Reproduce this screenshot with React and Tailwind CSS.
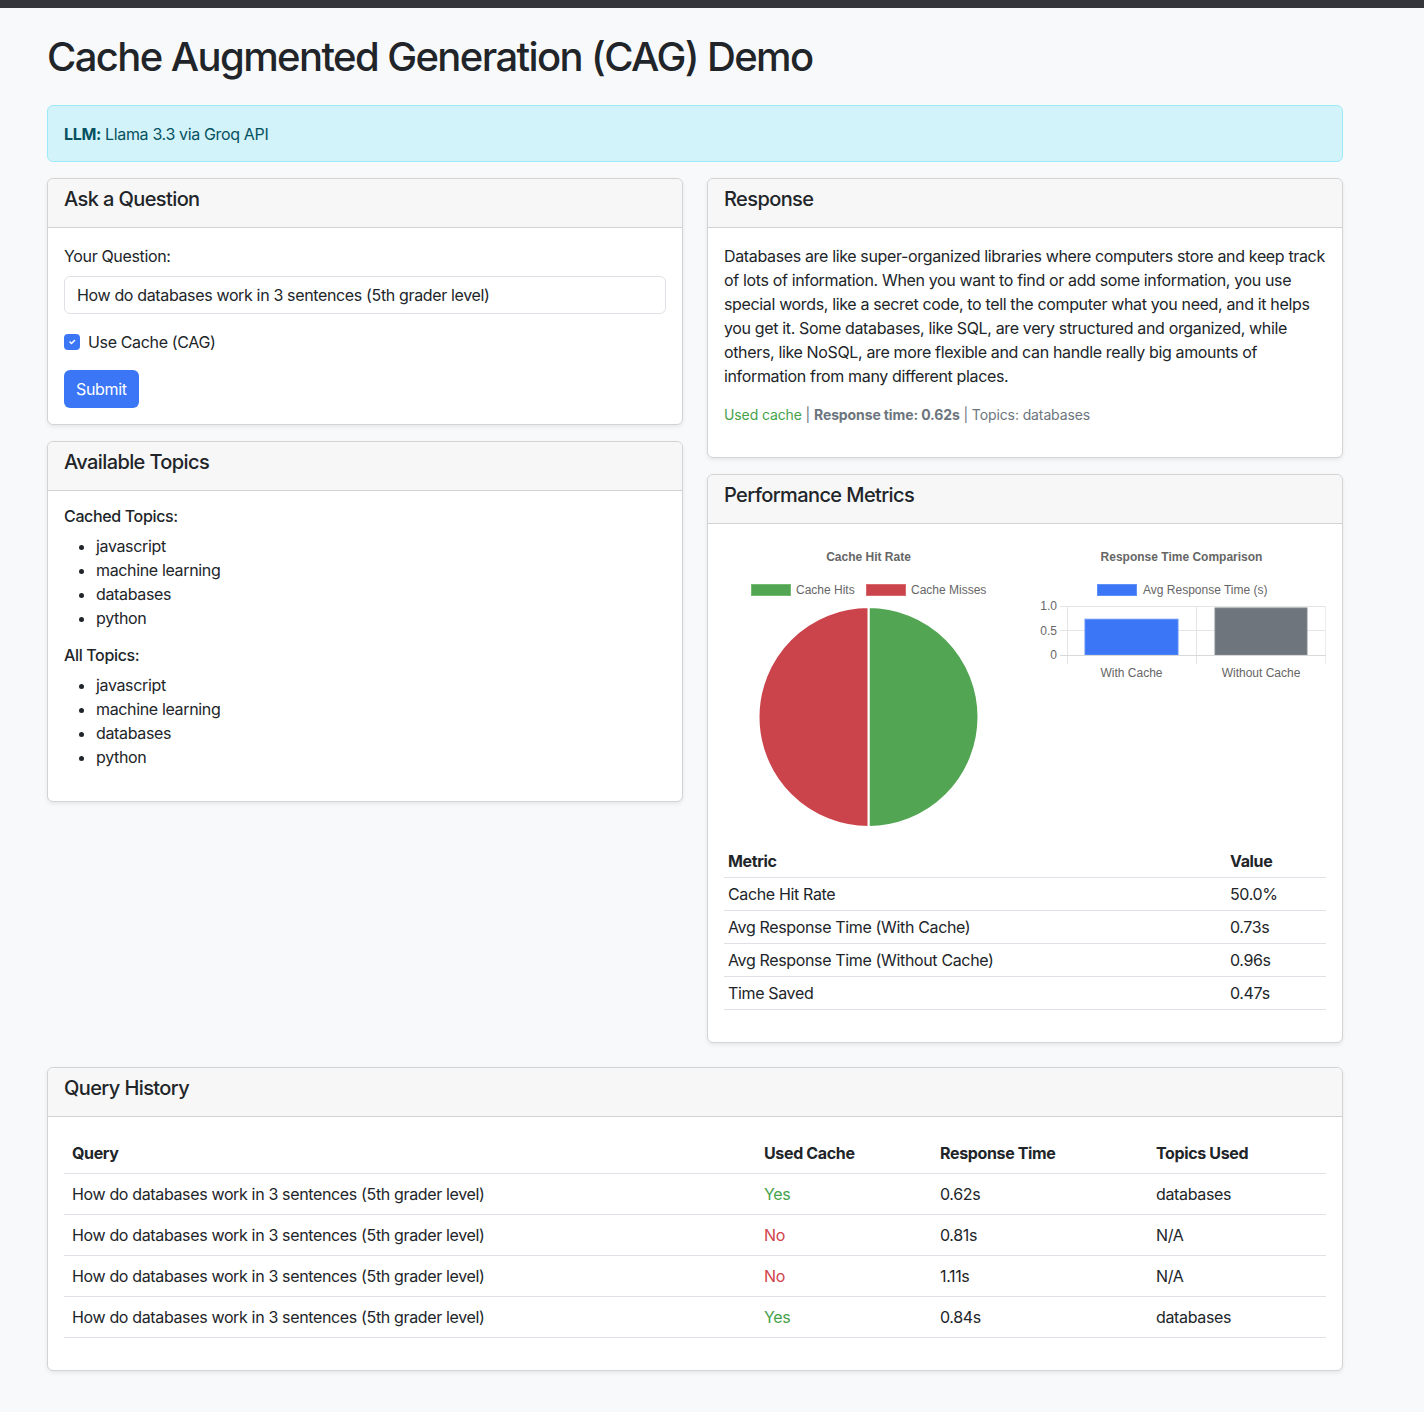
import React from "react";

const BLUE = "#3a76f6";

function Card({ title, children, className = "" }) {
  return (
    <div className={"rounded-md border border-[#d3d3d4] bg-white shadow-[0_2px_4px_rgba(0,0,0,0.075)] " + className}>
      <div className="rounded-t-md border-b border-[#d3d3d4] bg-[#f7f7f7] px-4 pt-2 pb-4 text-[20px] font-medium leading-6 tracking-[-0.03em] text-[#212529]">
        {title}
      </div>
      <div className="p-4">{children}</div>
    </div>
  );
}

function TopicList({ items }) {
  return (
    <ul className="mb-4 list-disc pl-8">
      {items.map((t) => (
        <li key={t} className="leading-6">
          {t}
        </li>
      ))}
    </ul>
  );
}

const svgFont = { fontFamily: "'Liberation Sans', Arial, sans-serif", letterSpacing: 0 };

function PieChart() {
  const cx = 144.5;
  const cy = 177;
  const r = 110;
  return (
    <svg width="289" height="305" style={svgFont}>
      <text x={cx} y="21" textAnchor="middle" fontSize="12" fontWeight="bold" fill="#666">
        Cache Hit Rate
      </text>
      <rect x="27.5" y="44.5" width="39" height="11" fill="#52a552" stroke="#73bb73" strokeWidth="1" />
      <text x="72" y="54" fontSize="12" fill="#666">
        Cache Hits
      </text>
      <rect x="142.5" y="44.5" width="39" height="11" fill="#cc444b" stroke="#d86a70" strokeWidth="1" />
      <text x="187" y="54" fontSize="12" fill="#666">
        Cache Misses
      </text>
      <path d={`M ${cx} ${cy - r} A ${r} ${r} 0 0 1 ${cx} ${cy + r} Z`} fill="#52a552" stroke="#ffffff" strokeWidth="2" />
      <path d={`M ${cx} ${cy + r} A ${r} ${r} 0 0 1 ${cx} ${cy - r} Z`} fill="#cc444b" stroke="#ffffff" strokeWidth="2" />
    </svg>
  );
}

function BarChart() {
  const top = 66;
  const bottom = 115;
  const h = bottom - top;
  const y73 = bottom - h * 0.73;
  const y96 = bottom - h * 0.96;
  return (
    <svg width="289" height="145" style={svgFont}>
      <text x="144.5" y="21" textAnchor="middle" fontSize="12" fontWeight="bold" fill="#666">
        Response Time Comparison
      </text>
      <rect x="60.5" y="44.5" width="39" height="11" fill={BLUE} stroke="#5f92f8" strokeWidth="1" />
      <text x="106" y="54" fontSize="12" fill="#666">
        Avg Response Time (s)
      </text>
      <line x1="23" y1={top + 0.5} x2="289" y2={top + 0.5} stroke="#e5e5e5" />
      <line x1="23" y1={90.5} x2="289" y2={90.5} stroke="#e5e5e5" />
      <line x1="30.5" y1={top} x2="30.5" y2="124" stroke="#e5e5e5" />
      <line x1="159.5" y1={top} x2="159.5" y2="124" stroke="#e5e5e5" />
      <line x1="288.5" y1={top} x2="288.5" y2="124" stroke="#ececec" />
      <rect x="48" y={y73} width="93" height={bottom - y73} fill={BLUE} stroke="#5f92f8" strokeWidth="1" />
      <rect x="178" y={y96} width="92" height={bottom - y96} fill="#6e757c" stroke="#858b91" strokeWidth="1" />
      <line x1="23" y1={bottom + 0.5} x2="289" y2={bottom + 0.5} stroke="#d9d9d9" />
      <text x="20" y={top + 4} textAnchor="end" fontSize="12" fill="#666">
        1.0
      </text>
      <text x="20" y={95} textAnchor="end" fontSize="12" fill="#666">
        0.5
      </text>
      <text x="20" y={bottom + 4} textAnchor="end" fontSize="12" fill="#666">
        0
      </text>
      <text x="94.5" y="137" textAnchor="middle" fontSize="12" fill="#666">
        With Cache
      </text>
      <text x="224" y="137" textAnchor="middle" fontSize="12" fill="#666">
        Without Cache
      </text>
    </svg>
  );
}

const responseLines = [
  "Databases are like super-organized libraries where computers store and keep track",
  "of lots of information. When you want to find or add some information, you use",
  "special words, like a secret code, to tell the computer what you need, and it helps",
  "you get it. Some databases, like SQL, are very structured and organized, while",
  "others, like NoSQL, are more flexible and can handle really big amounts of",
  "information from many different places.",
];

const metrics = [
  ["Cache Hit Rate", "50.0%"],
  ["Avg Response Time (With Cache)", "0.73s"],
  ["Avg Response Time (Without Cache)", "0.96s"],
  ["Time Saved", "0.47s"],
];

const history = [
  ["Yes", "0.62s", "databases"],
  ["No", "0.81s", "N/A"],
  ["No", "1.11s", "N/A"],
  ["Yes", "0.84s", "databases"],
];

export default function App() {
  const q = "How do databases work in 3 sentences (5th grader level)";
  return (
    <div
      className="min-h-screen bg-[#f8f9fa] pb-[42px] text-base leading-6 tracking-[-0.022em] text-[#212529]"
      style={{ fontFamily: "Inter, 'Liberation Sans', Arial, sans-serif" }}
    >
      <div className="h-2 w-full bg-[#35363b]" />
      <div className="ml-[47px] w-[1296px]">
        <h1 className="mt-[25px] mb-6 text-[40px] font-medium leading-[48px] tracking-[-0.04em]">
          Cache Augmented Generation (CAG) Demo
        </h1>

        <div className="mb-4 rounded-md border border-[#9eeaf9] bg-[#d3f3fb] px-4 pt-4 pb-[15px] text-[#055160]">
          <strong className="font-bold">LLM:</strong> Llama 3.3 via Groq API
        </div>

        <div className="flex items-start gap-6">
          <div className="flex w-[636px] flex-col gap-4">
            <Card title="Ask a Question">
              <div className="mb-2">Your Question:</div>
              <div className="mb-4 flex h-[38px] w-full items-center rounded-md border border-[#dee2e6] bg-white px-3">
                {q}
              </div>
              <div className="mb-4 flex h-6 items-center gap-2">
                <span className="flex h-4 w-4 items-center justify-center rounded-[4px]" style={{ background: BLUE }}>
                  <svg width="10" height="10" viewBox="0 0 20 20">
                    <path d="M6 10l3 3l6-6" fill="none" stroke="#fff" strokeWidth="3" strokeLinecap="round" strokeLinejoin="round" />
                  </svg>
                </span>
                <span>Use Cache (CAG)</span>
              </div>
              <button className="h-[38px] rounded-md px-3 text-white" style={{ background: BLUE }}>
                Submit
              </button>
            </Card>

            <Card title="Available Topics">
              <div className="mb-2 font-medium leading-[19px]">Cached Topics:</div>
              <TopicList items={["javascript", "machine learning", "databases", "python"]} />
              <div className="mb-2 font-medium leading-[19px]">All Topics:</div>
              <TopicList items={["javascript", "machine learning", "databases", "python"]} />
            </Card>
          </div>

          <div className="flex w-[636px] flex-col gap-4">
            <Card title="Response">
              <div className="mb-4">
                {responseLines.map((l, i) => (
                  <div key={i} className="whitespace-nowrap">
                    {l}
                  </div>
                ))}
              </div>
              <div className="mb-4 text-sm leading-[21px] tracking-[-0.008em] text-[#6c757d]">
                <span className="text-[#45a249]">Used cache</span> | <strong className="font-bold">Response time: 0.62s</strong> | Topics: databases
              </div>
            </Card>

            <Card title="Performance Metrics">
              <div className="flex h-[305px] items-start gap-6">
                <PieChart />
                <BarChart />
              </div>
              <table className="mb-4 w-full border-collapse">
                <thead>
                  <tr className="border-b border-[#dee2e6]">
                    <th className="w-[502px] px-1 py-1 text-left font-bold">Metric</th>
                    <th className="px-1 py-1 text-left font-bold">Value</th>
                  </tr>
                </thead>
                <tbody>
                  {metrics.map(([m, v]) => (
                    <tr key={m} className="border-b border-[#dee2e6]">
                      <td className="px-1 py-1">{m}</td>
                      <td className="px-1 py-1">{v}</td>
                    </tr>
                  ))}
                </tbody>
              </table>
            </Card>
          </div>
        </div>

        <Card title="Query History" className="mt-6">
          <table className="mb-4 w-full border-collapse">
            <thead>
              <tr className="border-b border-[#dee2e6]">
                <th className="w-[692px] px-2 py-2 text-left font-bold">Query</th>
                <th className="w-[176px] px-2 py-2 text-left font-bold">Used Cache</th>
                <th className="w-[216px] px-2 py-2 text-left font-bold">Response Time</th>
                <th className="px-2 py-2 text-left font-bold">Topics Used</th>
              </tr>
            </thead>
            <tbody>
              {history.map(([c, t, tp], i) => (
                <tr key={i} className="border-b border-[#dee2e6]">
                  <td className="px-2 py-2">{q}</td>
                  <td className={"px-2 py-2 " + (c === "Yes" ? "text-[#45a249]" : "text-[#d1434b]")}>{c}</td>
                  <td className="px-2 py-2">{t}</td>
                  <td className="px-2 py-2">{tp}</td>
                </tr>
              ))}
            </tbody>
          </table>
        </Card>
      </div>
    </div>
  );
}
